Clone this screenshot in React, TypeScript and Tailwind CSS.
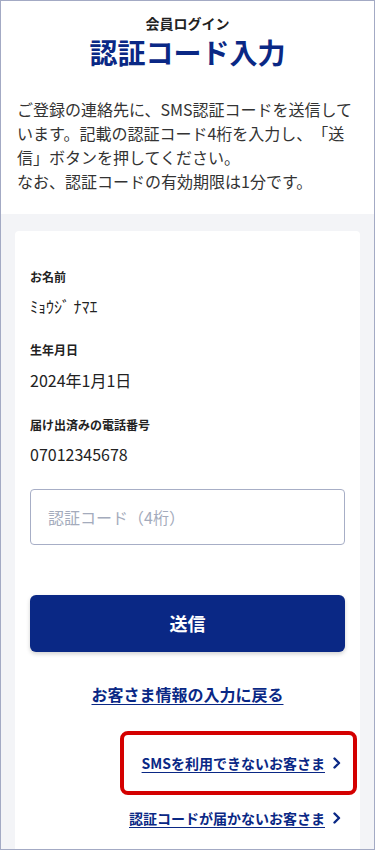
import React from "react";

const Chevron = () => (
  <svg width="8" height="12" viewBox="0 0 8 12" className="ml-[8px] shrink-0">
    <path d="M1.5 1.5 L6 6 L1.5 10.5" fill="none" stroke="#0a2885" strokeWidth="2.4" strokeLinecap="round" strokeLinejoin="round" />
  </svg>
);

export default function App() {
  return (
    <div
      className="w-[375px] h-[850px] overflow-hidden border border-[#a3aac4] bg-[#f3f4f7] text-[#222]"
      style={{ fontFamily: '"Noto Sans CJK JP", "Noto Sans", sans-serif' }}
    >
      <div className="bg-white pt-[12px] pb-[21px] px-[16px]">
        <p className="text-center text-[14px] font-bold leading-[20px]">会員ログイン</p>
        <h1 className="text-center text-[28px] font-bold leading-[36px] text-[#0a2885] mt-[1px]">認証コード入力</h1>
        <p className="mt-[27px] text-[16px] leading-[24px] text-[#333] [text-spacing-trim:space-all]">
          ご登録の連絡先に、SMS認証コードを送信しています。記載の認証コード4桁を入力し、「送信」ボタンを押してください。
          <br />
          なお、認証コードの有効期限は1分です。
        </p>
      </div>
      <div className="px-[14px] pt-[17px]">
        <div className="bg-white rounded-[4px] px-[15px] pt-[37px] pb-[40px]">
          <p className="text-[12px] font-bold leading-[18px]">お名前</p>
          <p className="mt-[9px] text-[16px] leading-[22px] whitespace-pre">ﾐｮｳｼﾞ ﾅﾏｴ</p>
          <p className="mt-[24px] text-[12px] font-bold leading-[18px]">生年月日</p>
          <p className="mt-[10px] text-[16px] leading-[22px]">2024年1月1日</p>
          <p className="mt-[25px] text-[12px] font-bold leading-[18px]">届け出済みの電話番号</p>
          <p className="mt-[9px] text-[16px] leading-[22px]">07012345678</p>
          <input
            type="text"
            placeholder="認証コード（4桁）"
            className="mt-[24px] block w-full h-[56px] border border-[#a7aec6] rounded-[4px] px-[17px] text-[16px] placeholder:text-[#a4abbc] outline-none"
            style={{ fontFamily: '"Noto Sans CJK JP", "Noto Sans", sans-serif' }}
          />
          <button className="mt-[50px] w-full h-[57px] rounded-[6px] bg-[#0a2885] text-white text-[18px] font-bold shadow-[0_2px_4px_rgba(0,0,0,0.18)]">
            送信
          </button>
          <div className="mt-[30px] text-center">
            <a className="text-[16px] font-bold text-[#0a2885] underline underline-offset-[3px] leading-[24px]">お客さま情報の入力に戻る</a>
          </div>
          <div className="mt-[25px] flex justify-end -mr-[12px]">
            <div className="border-[4px] border-[#d40000] rounded-[8px] h-[64px] pl-[18px] pr-[12px] flex items-center">
              <a className="text-[14px] font-bold text-[#0a2885] underline underline-offset-[3px] leading-[20px]">SMSを利用できないお客さま</a>
              <Chevron />
            </div>
          </div>
          <div className="mt-[13px] flex justify-end items-center pr-[4px]">
            <a className="text-[14px] font-bold text-[#0a2885] underline underline-offset-[3px] leading-[20px]">認証コードが届かないお客さま</a>
            <Chevron />
          </div>
        </div>
      </div>
    </div>
  );
}
